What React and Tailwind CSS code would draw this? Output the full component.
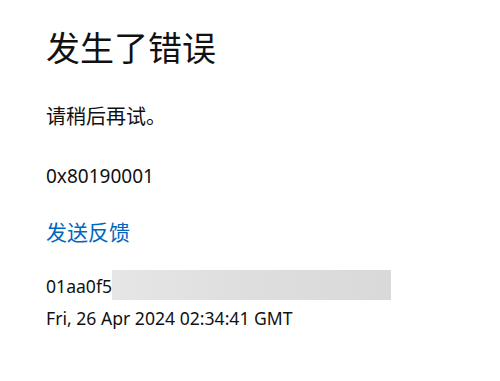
const font = { fontFamily: '"Segoe UI", "Noto Sans", "Noto Sans CJK SC", sans-serif' };

export default function App() {
    return (
        <div className="w-[500px] h-[381px] bg-white text-[#111111] pl-[46px] pt-[28px]" style={font}>
            <div className="h-[40px] leading-[40px] text-[34px] font-normal">发生了错误</div>

            <div className="mt-[37px] h-[24px] leading-[24px] text-[20px]">请稍后再试。</div>

            <div className="mt-[35px] h-[24px] leading-[24px] text-[19px]">0x80190001</div>

            <div className="mt-[32px] h-[24px] leading-[24px] text-[21px] text-[#0067c0]">发送反馈</div>

            <div className="mt-[26px] flex items-end">
                <span className="leading-[24px] text-[17.6px] pb-[2px]">01aa0f5</span>
                <div className="w-[279px] h-[30px] bg-gradient-to-r from-[#e6e6e6] via-[#dedede] to-[#d9d9d9]" />
            </div>

            <div className="mt-[6px] h-[24px] leading-[24px] text-[17.6px]">Fri, 26 Apr 2024 02:34:41 GMT</div>
        </div>
    );
}
